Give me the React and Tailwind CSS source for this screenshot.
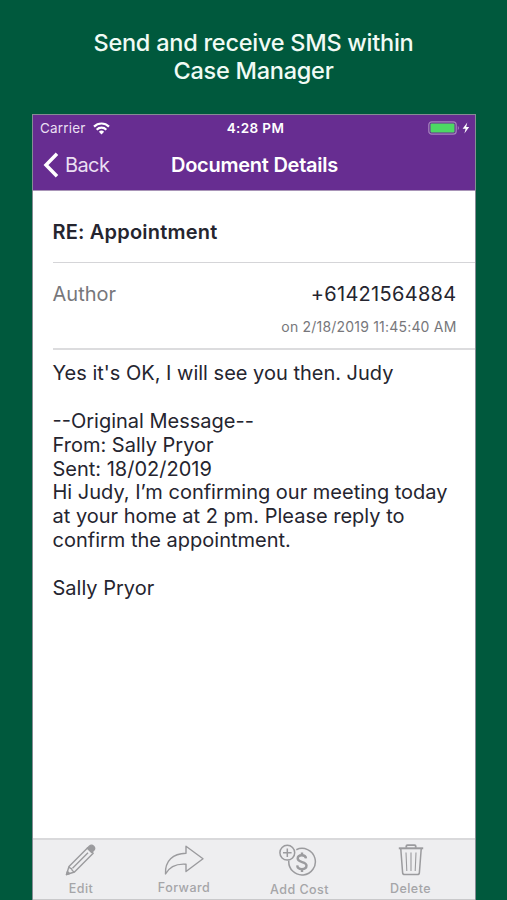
import React from 'react';

const messageLines = [
  "Yes it's OK, I will see you then. Judy",
  '',
  '--Original Message--',
  'From: Sally Pryor',
  'Sent: 18/02/2019',
  'Hi Judy, I’m confirming our meeting today',
  'at your home at 2 pm. Please reply to',
  'confirm the appointment.',
  '',
  'Sally Pryor',
];

const WifiIcon = () => (
  <svg width="17" height="13" viewBox="0 0 17 13" fill="none" stroke="white" strokeWidth="2.2">
    <path d="M1 4.6a10.6 10.6 0 0 1 15 0" />
    <path d="M3.7 7.7a6.8 6.8 0 0 1 9.6 0" />
    <path d="M8.5 12.4 5.9 9.8a3.7 3.7 0 0 1 5.2 0z" fill="white" stroke="none" />
  </svg>
);

const BatteryIcon = () => (
  <svg width="43" height="14" viewBox="0 0 43 14" fill="none">
    <rect x="0.8" y="0.8" width="27.4" height="12.4" rx="3" stroke="#a583bd" strokeWidth="1.2" />
    <rect x="2.5" y="2.5" width="24" height="9" rx="1" fill="#4cd964" />
    <path d="M29.8 5v4c1.4-.6 1.4-3.4 0-4z" fill="#a583bd" />
    <path d="M39.3 1.5 34.6 7.8h3l-1.2 4.7 4.8-6.4h-3z" fill="white" />
  </svg>
);

const PencilIcon = () => (
  <svg width="32" height="32" viewBox="0 0 32 32" fill="none" stroke="#9b9b9e" strokeWidth="1.4" strokeLinejoin="round">
    <path d="M1.5 30.5 4 22.5 22.7 3.8l5.5 5.5L9.5 28z" />
    <path d="M4 22.5c.6 1.6 1.2 2 2.5 2.3.4 1.7 1.2 2.6 3 3.2M7.5 24.3 23 8.8" />
    <path d="M22.3 4.2 24.3 2.2c1.5-1.5 3-1.3 4.3 0s1.500 2.800 0 4.300l-2 2z" fill="#9b9b9e" />
    <path d="M1.5 30.5l1-3 2 2z" fill="#9b9b9e" />
  </svg>
);

const ForwardIcon = () => (
  <svg width="40" height="30" viewBox="0 0 40 30" fill="none" stroke="#9b9b9e" strokeWidth="1.4" strokeLinejoin="round">
    <path d="M22 1.2 39 13.8 22 26.5v-7.3C12.5 18.5 5.5 21.5 1.5 29 .8 16 9 8.5 22 8.3z" />
  </svg>
);

const AddCostIcon = () => (
  <svg width="38" height="33" viewBox="0 0 38 33" fill="none" stroke="#9b9b9e" strokeWidth="1.5">
    <path d="M17.3 5.7A13.3 13.3 0 1 1 9.8 16.5" />
    <circle cx="8.3" cy="8.7" r="7.4" />
    <path d="M8.3 4.4v8.6M4 8.7h8.6" />
    <path d="M27 14.4c-.3-2-1.9-3.1-4.1-3.1-2.5 0-4.2 1.3-4.2 3.3 0 4.6 8.8 2.4 8.8 7 0 2.2-1.9 3.5-4.6 3.5s-4.5-1.3-4.7-3.7" strokeWidth="2.4" />
    <path d="M23 8.400v3M23 25v3" strokeWidth="2.400" />
  </svg>
);

const TrashIcon = () => (
  <svg width="26" height="32" viewBox="0 0 26 32" fill="none" stroke="#9b9b9e" strokeWidth="1.5">
    <path d="M.8 4.3h24.4" strokeWidth="2" />
    <path d="M8.3 3.8V2.3c0-.7.4-1.1 1.1-1.1h7.2c.7 0 1.1.4 1.1 1.1v1.5" strokeWidth="1.8" />
    <path d="M2.8 5 4.6 28.6c.1 1.3.8 2 2 2h12.8c1.2 0 1.9-.7 2-2L23.2 5" />
    <path d="M8 8.5l.8 18.5M13 8.5V27M18 8.5 17.2 27" strokeWidth="1.1" />
  </svg>
);

const ToolbarItem = ({ label, className, children }) => (
  <button className={`flex flex-col items-center ${className}`}>
    {children}
    <span className="mt-1 text-[12.5px] leading-[17px] font-medium tracking-[0.45px] whitespace-nowrap text-[#a5a5a8]">{label}</span>
  </button>
);

const App = () => {
  return (
    <div className="flex h-[900px] w-[507px] flex-col overflow-hidden bg-[#00593d] font-['Inter',sans-serif]">
      <h1 className="h-[114px] shrink-0 pt-[29px] text-center text-[23.5px] leading-7 font-medium tracking-[-0.25px] text-[#f1fbf5]">
        Send and receive SMS within
        <br />
        Case Manager
      </h1>

      <div className="ml-8 flex w-[444px] grow flex-col border border-b-0 border-[#858c94] bg-white">
        {/* Status bar and navigation */}
        <header className="h-[76px] shrink-0 border-b border-[#a995b8] bg-[#672d91] text-white">
          <div className="grid h-[26px] grid-cols-3 items-center pr-[4px] pl-[7px] text-[13.5px] leading-4">
            <div className="flex items-center gap-[7px] text-[#eadff2]">
              <span className="tracking-[0.2px]">Carrier</span>
              <WifiIcon />
            </div>
            <span className="text-center font-semibold tracking-[0.4px]">4:28 PM</span>
            <div className="flex justify-end">
              <BatteryIcon />
            </div>
          </div>
          <div className="grid h-[48px] grid-cols-[1fr_auto_1fr] items-center pr-[9px] pl-2.5">
            <button className="flex items-center gap-[6px] text-[20px] text-[#eadff2]">
              <svg width="16" height="26" viewBox="0 0 16 26" fill="none" stroke="white" strokeWidth="3.5">
                <path d="M14 1.8 3 13l11 11.2" />
              </svg>
              <span className="tracking-[-0.6px]">Back</span>
            </button>
            <h2 className="text-[20px] font-semibold tracking-[-0.25px]">Document Details</h2>
            <span />
          </div>
        </header>

        {/* Document */}
        <main className="grow pl-[19.5px] text-[#25252f]">
          <div className="flex h-[72px] items-center border-b border-[#d5d5d8] pt-2.5 text-[20px] font-semibold tracking-[0.2px]">
            RE: Appointment
          </div>
          <div className="flex h-[87px] flex-col border-b-2 border-[#dcdcde] pt-[18.5px] pr-[18.5px]">
            <div className="flex justify-between text-[20px] leading-6">
              <span className="text-[#77777b]">Author</span>
              <span className="tracking-[0.3px]">+61421564884</span>
            </div>
            <div className="mt-[13px] text-right text-[14px] leading-4 tracking-[0.2px] text-[#77777b]">on 2/18/2019 11:45:40 AM</div>
          </div>
          <div className="pt-3 text-[20px] leading-[23.9px] whitespace-nowrap">
            {messageLines.map((line, i) => (
              <p key={i} className="h-[23.9px]">{line}</p>
            ))}
          </div>
        </main>

        {/* Toolbar */}
        <footer className="flex h-[62px] shrink-0 border-t-2 border-b border-t-[#d9d9db] border-b-[#c9c9cb] bg-[#eeeef0]">
          <ToolbarItem label="Edit" className="w-[96px] pt-[4px]">
            <PencilIcon />
          </ToolbarItem>
          <ToolbarItem label="Forward" className="w-[110px] pt-[5px]">
            <ForwardIcon />
          </ToolbarItem>
          <ToolbarItem label="Add Cost" className="w-[121px] pt-[4px]">
            <div className="mr-1">
              <AddCostIcon />
            </div>
          </ToolbarItem>
          <ToolbarItem label="Delete" className="w-[101px] pt-[4px]">
            <TrashIcon />
          </ToolbarItem>
        </footer>
      </div>
    </div>
  );
};

export default App;
